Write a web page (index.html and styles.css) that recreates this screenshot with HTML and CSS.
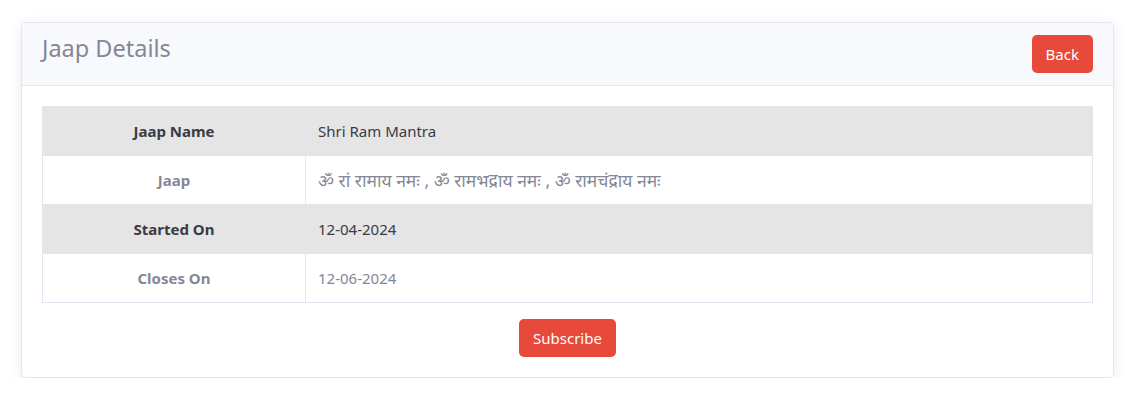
FILE: index.html
```html
<!DOCTYPE html>
<html>
<head>
<meta charset="utf-8">
<link rel="stylesheet" href="styles.css">
</head>
<body>
<div class="card">
  <div class="card-header">
    <h5 class="card-title">Jaap Details</h5>
    <button class="btn">Back</button>
  </div>
  <div class="card-body">
    <table class="details">
      <tr class="striped">
        <th>Jaap Name</th>
        <td>Shri Ram Mantra</td>
      </tr>
      <tr>
        <th>Jaap</th>
        <td class="mantra">ॐ रां रामाय नमः , ॐ रामभद्राय नमः , ॐ रामचंद्राय नमः</td>
      </tr>
      <tr class="striped">
        <th>Started On</th>
        <td>12-04-2024</td>
      </tr>
      <tr>
        <th>Closes On</th>
        <td>12-06-2024</td>
      </tr>
    </table>
    <div class="actions">
      <button class="btn">Subscribe</button>
    </div>
  </div>
</div>
</body>
</html>
```
FILE: styles.css
```css
* { box-sizing: border-box; }
html, body { margin: 0; background: #ffffff; }
body {
  padding: 22px 24px 0 21px;
  font-family: "Noto Sans", "Open Sans", sans-serif;
  color: #858796;
}
.card {
  width: 1093px;
  border: 1px solid #e3e6f0;
  border-radius: 5px;
  background: #fff;
  box-shadow: 0 3px 14px rgba(58, 59, 69, 0.10);
  overflow: hidden;
}
.card-header {
  display: flex;
  justify-content: space-between;
  align-items: flex-start;
  background: #f8f9fc;
  border-bottom: 1px solid #e3e6f0;
  padding: 12px 20px 12px 20px;
}
.card-title {
  margin: 0;
  font-size: 23.5px;
  font-weight: 400;
  line-height: 27px;
  color: #858796;
}
.btn {
  font-family: inherit;
  font-size: 15px;
  line-height: 24px;
  padding: 7px 14px;
  border: 0;
  border-radius: 5px;
  background: #e74a3b;
  color: #fff;
  cursor: pointer;
}
.card-body {
  padding: 20px 20px 20px 20px;
}
.details {
  width: 100%;
  border-collapse: collapse;
  font-size: 15px;
}
.details th, .details td {
  height: 49px;
  border: 1px solid #e3e6f0;
  padding: 0 12px 1px;
  vertical-align: middle;
}
.details th {
  width: 263px;
  text-align: center;
  font-weight: 700;
}
.details td {
  text-align: left;
}
.details td.mantra {
  font-size: 17.5px;
}
.details tr.striped th, .details tr.striped td {
  background: #e5e5e6;
  color: #3a3b45;
  border-color: #e5e5e6;
}
.actions {
  display: flex;
  justify-content: center;
  padding-top: 16px;
}
```
